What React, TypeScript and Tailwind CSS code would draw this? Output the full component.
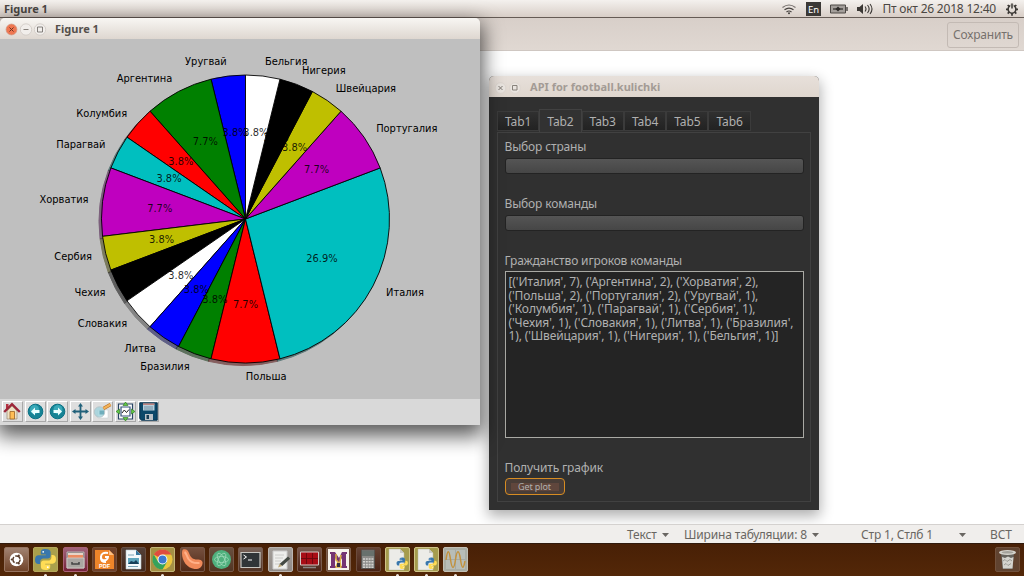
import React from "react";

type Slice = { name: string; n: number; color: string; shade: string };

const slices: Slice[] = [
  { name: "Уругвай", n: 1, color: "#0000ff", shade: "#00004d" },
  { name: "Аргентина", n: 2, color: "#008000", shade: "#002600" },
  { name: "Колумбия", n: 1, color: "#ff0000", shade: "#4d0000" },
  { name: "Парагвай", n: 1, color: "#00bfbf", shade: "#003939" },
  { name: "Хорватия", n: 2, color: "#bf00bf", shade: "#390039" },
  { name: "Сербия", n: 1, color: "#bfbf00", shade: "#393900" },
  { name: "Чехия", n: 1, color: "#000000", shade: "#000000" },
  { name: "Словакия", n: 1, color: "#ffffff", shade: "#4d4d4d" },
  { name: "Литва", n: 1, color: "#0000ff", shade: "#00004d" },
  { name: "Бразилия", n: 1, color: "#008000", shade: "#002600" },
  { name: "Польша", n: 2, color: "#ff0000", shade: "#4d0000" },
  { name: "Италия", n: 7, color: "#00bfbf", shade: "#003939" },
  { name: "Португалия", n: 2, color: "#bf00bf", shade: "#390039" },
  { name: "Швейцария", n: 1, color: "#bfbf00", shade: "#393900" },
  { name: "Нигерия", n: 1, color: "#000000", shade: "#000000" },
  { name: "Бельгия", n: 1, color: "#ffffff", shade: "#4d4d4d" },
];

const CX = 245.5;
const CY = 180;
const R = 144;
const TOTAL = 26;

function polar(angle: number, r: number) {
  return { x: CX + r * Math.cos(angle), y: CY - r * Math.sin(angle) };
}

function PieChart() {
  let acc = 0;
  const parts = slices.map((s) => {
    const a = Math.PI / 2 + (acc / TOTAL) * 2 * Math.PI;
    acc += s.n;
    const b = Math.PI / 2 + (acc / TOTAL) * 2 * Math.PI;
    const p = polar(a, R);
    const q = polar(b, R);
    const m = (a + b) / 2;
    return {
      ...s,
      d: `M${CX} ${CY}L${p.x} ${p.y}A${R} ${R} 0 0 0 ${q.x} ${q.y}Z`,
      label: polar(m, R * 1.1),
      pct: polar(m, R * 0.6),
      right: Math.cos(m) > -0.001,
    };
  });
  return (
    <svg width="479" height="360" viewBox="0 0 479 360" className="block" fontFamily="'DejaVu Sans', sans-serif" fontSize="9.9">
      <g transform="translate(-2.5 2.5)">
        {parts.map((p) => (
          <path key={p.name} d={p.d} fill={p.shade} stroke={p.shade} opacity="0.5" />
        ))}
      </g>
      {parts.map((p) => (
        <path key={p.name} d={p.d} fill={p.color} stroke="#000" strokeWidth="0.9" strokeLinejoin="round" />
      ))}
      {parts.map((p) => (
        <g key={p.name}>
          <text x={p.label.x + 0.3} y={p.label.y + 3} textAnchor={p.right ? "start" : "end"}>
            {p.name}
          </text>
          <text x={p.pct.x} y={p.pct.y + 3} textAnchor="middle" fillOpacity="0.85">
            {((p.n / TOTAL) * 100).toFixed(1)}%
          </text>
        </g>
      ))}
    </svg>
  );
}

function ToolButton({ children }: { children: React.ReactNode }) {
  return (
    <div className="flex h-[21px] w-[21px] items-center justify-center border border-t-white border-l-white border-r-[#a8a8a8] border-b-[#a8a8a8] bg-[#dedede]">
      <svg width="19" height="19" viewBox="0 0 19 19">
        {children}
      </svg>
    </div>
  );
}

function FigureToolbar() {
  return (
    <div className="flex h-[26px] gap-[1.6px] bg-[#d9d9d9] pt-[2px] pl-[2px]">
      <ToolButton>
        <path d="M4 9v8h10V9L9 4z" fill="#eee0c2" stroke="#8b7965" strokeWidth=".6" />
        <path d="M3 2h2.500v5H3z" fill="#b53040" />
        <path d="M1.200 10 9 2.200l7.800 7.800" fill="none" stroke="#9d2639" strokeWidth="2.300" />
        <path d="M7 9.500h4.500V17H7z" fill="#ffbd55" stroke="#9d6524" strokeWidth=".8" />
      </ToolButton>
      <ToolButton>
        <circle cx="9.500" cy="9.500" r="7.300" fill="#168395" stroke="#087084" />
        <circle cx="8.500" cy="7.500" r="4.500" fill="#38a9b8" />
        <path d="m5 9.500 4-4v2.600h4.500v2.800H9v2.600z" fill="#e9ffff" />
      </ToolButton>
      <ToolButton>
        <circle cx="9.500" cy="9.500" r="7.300" fill="#168395" stroke="#087084" />
        <circle cx="10" cy="7.500" r="4.500" fill="#38a9b8" />
        <path d="m14 9.500-4-4v2.600H5.500v2.800H10v2.600z" fill="#e9ffff" />
      </ToolButton>
      <ToolButton>
        <path d="M9.500 3v13M3 9.500h13" stroke="#21617a" strokeWidth="1.800" />
        <path d="M9.500 1 12 4.500H7zM9.500 18 12 14.500H7zM1 9.500 4.500 7v5zM18 9.500 14.500 7v5z" fill="#21617a" />
      </ToolButton>
      <ToolButton>
        <path d="M5 8h10v8H5z" fill="#fff" stroke="#c1ccd0" strokeWidth=".5" />
        <circle cx="6.500" cy="10" r="5.200" fill="#9fd2dc" fillOpacity=".8" stroke="#b5c6ca" />
        <path d="M6.500 8.500h4.500v4H6.500z" fill="#6faebc" />
        <path d="m10.500 6.500 7-4" stroke="#b76d1c" strokeWidth="3.400" />
        <path d="m10.500 6.500 7-4" stroke="#f2b25a" strokeWidth="2.200" />
      </ToolButton>
      <ToolButton>
        <path d="M2.500 2h14v15h-14z" fill="#fff" stroke="#294565" strokeWidth="1.200" />
        <path d="M5 5h9v9H5z" fill="#fff" stroke="#35527b" strokeWidth="1.200" />
        <path d="m6 11 2.300-3 2.200 2.500L13 7.500" fill="none" stroke="#222" />
        <path d="M9.500 0 12 3.500H7zM9.500 19 12 15.500H7zM0 9.500 3.500 7v5zM19 9.500 15.500 7v5z" fill="#62ca45" stroke="#267519" strokeWidth=".6" />
      </ToolButton>
      <ToolButton>
        <path d="M.8.800h17.400v17.400H2.500L.8 16.500z" fill="#0c4869" stroke="#07314c" />
        <path d="M4 1.500h11.500v7H4z" fill="#b8cfdb" />
        <path d="M4 1.500h11.500v1.300H4z" fill="#c07068" />
        <path d="M5 5h9M5 7h9" stroke="#416780" strokeWidth=".6" />
        <path d="M6 12h8v6H6z" fill="#bac1c6" />
        <path d="M7.500 13h2.500v4H7.500z" fill="#173d55" />
      </ToolButton>
    </div>
  );
}

function FigureWindow() {
  return (
    <div className="absolute top-[18px] left-0 w-[479.500px] rounded-t-[5px] shadow-[0_8px_20px_3px_rgba(0,0,0,0.65)]">
      <div className="flex h-[21px] items-center rounded-t-[5px] bg-gradient-to-b from-[#f8f6f3] to-[#ded7d0] pl-[5px]">
        <svg width="42" height="14" viewBox="0 0 42 14">
          <circle cx="6.500" cy="7.500" r="5.400" fill="#ef7650" stroke="#d39680" strokeWidth=".8" />
          <path d="m4.500 5.500 4 4m0-4-4 4" stroke="#6d3322" strokeWidth="1" />
          <circle cx="21" cy="7.500" r="5.700" fill="#f1eeeb" stroke="#cec8c3" strokeWidth=".8" />
          <path d="M18.500 7.500h5" stroke="#85807b" />
          <circle cx="35" cy="7.500" r="5.700" fill="#f1eeeb" stroke="#cec8c3" strokeWidth=".8" />
          <path d="M32.500 5h5v5h-5z" fill="none" stroke="#77736f" strokeWidth=".9" />
        </svg>
        <span className="ml-[8px] pt-[1px] text-[11px] font-bold text-[#55504b]">Figure 1</span>
      </div>
      <div className="h-[360px] bg-[#bfbfbf]">
        <PieChart />
      </div>
      <FigureToolbar />
    </div>
  );
}

function Field({ label }: { label: string }) {
  return (
    <div className="h-[57px]">
      <div className="h-[18px] text-[12px] leading-[17px] tracking-[-0.15px]">{label}</div>
      <div className="mt-[2px] h-[16px] rounded-[3px] border border-[#232323] bg-gradient-to-b from-[#555] to-[#464646]" />
    </div>
  );
}

const playerLines = [
  { text: "[('Италия', 7), ('Аргентина', 2), ('Хорватия', 2),", cls: "tracking-[-0.1px]" },
  { text: "('Польша', 2), ('Португалия', 2), ('Уругвай', 1),", cls: "tracking-[-0.11px]" },
  { text: "('Колумбия', 1), ('Парагвай', 1), ('Сербия', 1),", cls: "tracking-[-0.07px]" },
  { text: "('Чехия', 1), ('Словакия', 1), ('Литва', 1), ('Бразилия',", cls: "tracking-[-0.09px]" },
  { text: "1), ('Швейцария', 1), ('Нигерия', 1), ('Бельгия', 1)]", cls: "tracking-[-0.13px]" },
];

function ApiWindow() {
  return (
    <div className="absolute top-[76px] left-[489px] flex h-[434px] w-[330px] flex-col rounded-t-[5px] bg-[#303030] text-[#b0b0b0] shadow-[0_5px_14px_1px_rgba(0,0,0,0.32)]">
      <div className="flex h-[21px] shrink-0 items-center rounded-t-[5px] bg-gradient-to-b from-[#e7e0da] to-[#dfd6ce] pl-[5px]">
        <svg width="28" height="14" viewBox="0 0 28 14">
          <circle cx="6.500" cy="8" r="5.300" fill="#e9e4df" stroke="#ddd6d0" />
          <path d="m4.500 6 4 4m0-4-4 4" stroke="#7d7771" />
          <circle cx="21" cy="8" r="5.300" fill="#e9e4df" stroke="#ddd6d0" />
          <path d="M18.500 5.500h4.500v4.500h-4.500z" fill="none" stroke="#7d7771" strokeWidth=".9" />
        </svg>
        <span className="ml-[8px] pt-[2px] text-[11px] font-bold tracking-[0.02px] text-[#a39b95]">API for football.kulichki</span>
      </div>
      <div className="flex flex-1 flex-col px-[8px] pt-[12px] pb-[8px]">
        <div className="flex h-[23px] items-end text-[12px] tracking-[-0.1px]">
          {["Tab1", "Tab2", "Tab3", "Tab4", "Tab5", "Tab6"].map((tab) => (
            <div
              key={tab}
              className={
                tab === "Tab2"
                  ? "flex h-[23px] w-[42.300px] items-center justify-center border border-b-0 border-[#414141] bg-[#323232] pt-[1px]"
                  : "mb-[1px] flex h-[20px] w-[42.300px] items-center justify-center border border-[#3b3b3b] bg-gradient-to-b from-[#303030] to-[#222] pt-[2px]"
              }
            >
              {tab}
            </div>
          ))}
        </div>
        <div className="flex flex-1 flex-col border border-[#414141] px-[6.500px] pt-[5px]">
          <Field label="Выбор страны" />
          <Field label="Выбор команды" />
          <div className="h-[19px] text-[12px] leading-[17px] tracking-[-0.15px]">Гражданство игроков команды</div>
          <div className="h-[167px] border border-[#a9a9a4] bg-[#242424] pt-[3px] pl-[3px] text-[12px] leading-[13.500px] whitespace-pre">
            {playerLines.map((l) => (
              <div key={l.text} className={l.cls}>
                {l.text}
              </div>
            ))}
          </div>
          <div className="mt-[21px] h-[18px] text-[12px] leading-[18px] tracking-[-0.15px]">Получить график</div>
          <div className="mt-[1px] flex h-[17px] w-[60px] items-center justify-center rounded-[4px] border-[1.500px] border-[#d78c22] bg-[#493d37] text-[9px] tracking-[-0.1px]">
            <span className="flex h-[8px] w-[48px] items-center justify-center bg-[#60463c]">Get plot</span>
          </div>
        </div>
      </div>
    </div>
  );
}

function SystemBar() {
  return (
    <div className="flex h-[18px] shrink-0 items-center border-b border-[#655b55] bg-gradient-to-b from-[#f4f1ee] to-[#d8cec7] pr-[5px] pl-[4px] text-[#4b4743]">
      <span className="pt-[1px] text-[11px] font-bold">Figure 1</span>
      <div className="ml-auto flex items-center">
        <svg width="94" height="18" viewBox="0 0 94 18">
          <g fill="none" stroke="#45413e" strokeWidth="1.200">
            <path d="M2.500 7.500q6.500-5 13 0" stroke="#77726f" />
            <path d="M4.500 9.800q4.500-3.500 9 0M6.500 12q2.500-2 5 0" />
          </g>
          <circle cx="9" cy="13.300" r="1" fill="#45413e" />
          <path d="M26 2h15v14H26z" fill="#3b3835" />
          <path d="M50.500 5h15v8h-15z" fill="#a39e9a" stroke="#4c4845" />
          <path d="M66 7h2v4h-2z" fill="#77726f" />
          <path d="M53 9h10" stroke="#2c2927" strokeWidth="1.200" />
          <path d="M58 6.500 60.500 9 58 11.500 55.500 9z" fill="#2c2927" />
          <path d="M77 7h2.500L83 4v10l-3.500-3H77z" fill="#3b3835" />
          <path d="M85 6.500q2 2.500 0 5M87.500 5q3.300 4 0 8M90 4q4 5 0 10" fill="none" stroke="#3b3835" strokeWidth="1.100" />
          <text x="28" y="13" fontFamily="'Noto Sans', sans-serif" fontSize="9.500" fill="#fff">
            En
          </text>
        </svg>
        <span className="ml-[8px] text-[12px] tracking-[-0.21px] whitespace-pre">Пт окт 26 2018 12:40</span>
        <svg className="ml-[9px]" width="14" height="14" viewBox="0 0 14 14">
          <circle cx="7" cy="7.300" r="3.900" fill="none" stroke="#3b3835" strokeWidth="1.600" />
          <path d="M7 11v2.700M1 7.300h2M11 7.300h2M2.700 3l1.400 1.400M11.300 3 9.900 4.400M2.700 11.600l1.400-1.400M11.300 11.600l-1.400-1.400" stroke="#3b3835" strokeWidth="1.700" />
          <path d="M5.300 1h3.400v4H5.300z" fill="#e4ded9" />
          <path d="M7 1.500v5" stroke="#3b3835" strokeWidth="1.500" />
        </svg>
      </div>
    </div>
  );
}

function Caret() {
  return (
    <svg width="7" height="4" viewBox="0 0 7 4">
      <path d="M0 0h7L3.500 4z" fill="#696662" />
    </svg>
  );
}

function Tile({ className, children, running }: { className: string; children: React.ReactNode; running?: boolean }) {
  return (
    <div className="relative h-[25px] w-[25px] shrink-0">
      <div className={`h-[25px] w-[25px] rounded-[2px] border ${className}`}>
        <svg width="23" height="23" viewBox="0 0 23 23">
          {children}
        </svg>
      </div>
      {running && <div className="absolute bottom-[-4px] left-[11px] h-[2px] w-[3px] rounded-t-full bg-[#eee5df]" />}
    </div>
  );
}

function PythonMark() {
  return (
    <>
      <path d="M11.400 1C7.500 1 6.800 2.600 6.800 4.200v2.200h5v.9H4.500C2.500 7.300 1 8.800 1 11.700s1.400 4.200 3.300 4.200h1.800v-2.300c0-1.900 1.500-3.200 3.300-3.200h4.500c1.500 0 2.700-1.200 2.700-2.700V4.200C16.600 2 14.500 1 11.400 1z" fill="#3977ac" />
      <path d="M11.600 22c3.900 0 4.600-1.600 4.600-3.200v-2.200h-5v-.9h7.300c2 0 3.500-1.500 3.500-4.400s-1.400-4.200-3.300-4.200h-1.300v2.300c0 1.900-1.500 3.200-3.300 3.200H9.600c-1.500 0-2.700 1.200-2.700 2.700v3.500c0 2.200 1.600 3.200 4.700 3.200z" fill="#ffdc55" />
      <circle cx="9.200" cy="3.800" r=".9" fill="#fff" />
      <circle cx="13.800" cy="19.200" r=".9" fill="#fff" />
    </>
  );
}

function PythonFile() {
  return (
    <>
      <path d="M3 1h11l4 4v17H3z" fill="#ecece8" stroke="#bbb9a7" strokeWidth=".5" />
      <path d="M14 1v4h4z" fill="#c9c9c5" />
      <g transform="translate(10 9) scale(.54)">
        <PythonMark />
      </g>
    </>
  );
}

function Dock() {
  return (
    <div className="flex h-[33px] shrink-0 items-start gap-[4.300px] border-t border-[#301a0c] bg-gradient-to-b from-[#482006] to-[#532708] pt-[3px] pr-[4px] pl-[4px]">
      <Tile className="border-[#96735f] bg-gradient-to-b from-[#a18372] to-[#704329]">
        <circle cx="11.500" cy="11.500" r="6.800" fill="#fff" />
        <circle cx="11.500" cy="11.500" r="3.600" fill="none" stroke="#593c2b" strokeWidth="1.500" strokeDasharray="6.200 1.340" />
        <circle cx="6.800" cy="11.500" r="1.100" fill="#593c2b" />
        <circle cx="13.800" cy="7.500" r="1.100" fill="#593c2b" />
        <circle cx="13.800" cy="15.500" r="1.100" fill="#593c2b" />
      </Tile>
      <Tile running className="border-[#b5a75b] bg-[#aaa04c]">
        <PythonMark />
      </Tile>
      <Tile running className="border-[#a96076] bg-gradient-to-b from-[#a0637a] to-[#752039]">
        <path d="M3 4h17v16H3z" fill="#777370" stroke="#b9b6b4" />
        <path d="M4 5h15v5H4z" fill="#e6d4c8" />
        <path d="M4 7h15v3H4z" fill="#ea8b62" />
        <path d="M3 10h17v10H3z" fill="#aaa6a2" stroke="#d8d4d0" strokeWidth=".7" />
        <path d="M8 14v2h7v-2" fill="none" stroke="#444" strokeWidth="1.500" />
      </Tile>
      <Tile className="border-[#73503c] bg-[#704028]">
        <path d="M2 2h14l5 5v14H2z" fill="#ef8529" />
        <path d="M16 2v5h5z" fill="#ffc083" />
        <path d="M15 5q-7-1-7 4 0 4 5 3 2-1 2-3h-3M8 9q-1 5 5 5" fill="none" stroke="#fff" strokeWidth="2" />
        <text x="6" y="20" fontFamily="'Liberation Sans', sans-serif" fontWeight="bold" fontSize="5.500" fill="#fff">
          PDF
        </text>
      </Tile>
      <Tile className="border-[#685044] bg-gradient-to-b from-[#534038] to-[#44291c]">
        <path d="M4 2h10l5 5v14H4z" fill="#f4f9fb" stroke="#b6c6ce" strokeWidth=".6" />
        <path d="M14 2v5h5z" fill="#34769e" />
        <path d="M6 10h11v6H6z" fill="#5fa6bd" />
        <path d="m6 16 3-3 3 1 2-2 3 4z" fill="#163f59" />
        <path d="M6 7h6M6 18.500h10" stroke="#7aa5b7" />
      </Tile>
      <Tile running className="border-[#c2b578] bg-[#a59144]">
        <circle cx="11.500" cy="11.500" r="10" fill="#eac63f" />
        <path d="M11.500 11.500 2.800 6.500A10 10 0 0 1 20.200 6.500h-8.700z" fill="#df4c3f" />
        <path d="M2.800 6.500A10 10 0 0 0 11.500 21.500L16 14l-8.800 0z" fill="#35a25b" />
        <circle cx="11.500" cy="11.500" r="4.900" fill="#fff" />
        <circle cx="11.500" cy="11.500" r="4" fill="#3d79cf" />
      </Tile>
      <Tile className="border-[#765747] bg-gradient-to-b from-[#76503e] to-[#512a18]">
        <path d="M2 1.500C5 .5 7 2 8 5c1.500 4.500 4 6.500 8 6.500 4 0 6 1.500 5.500 4-.5 4-4 6-8 5.500C6 20 1 13 1 5q0-3 1-3.500z" fill="#f08a5a" />
        <path d="M3.500 4c2 1 2 4 4 7 2.500 3.500 6 4.500 11 4" fill="none" stroke="#ffb088" strokeWidth="2" />
      </Tile>
      <Tile className="border-[#765747] bg-gradient-to-b from-[#68503f] to-[#523522]">
        <circle cx="11.500" cy="11.500" r="9.500" fill="#4fb07d" />
        <g fill="none" stroke="#9ed9b8" strokeWidth=".8">
          <ellipse cx="11.500" cy="11.500" rx="7" ry="3" />
          <ellipse cx="11.500" cy="11.500" rx="7" ry="3" transform="rotate(60 11.500 11.500)" />
          <ellipse cx="11.500" cy="11.500" rx="7" ry="3" transform="rotate(120 11.500 11.500)" />
        </g>
      </Tile>
      <Tile className="border-[#785b4d] bg-gradient-to-b from-[#79645a] to-[#513325]">
        <path d="M2 4.500h19v15H2z" fill="#303538" stroke="#c7c6c1" strokeWidth="1.200" />
        <path d="m4.500 7 3 2-3 2M9 12h4" fill="none" stroke="#fff" />
      </Tile>
      <Tile running className="border-[#bbb5b0] bg-gradient-to-b from-[#a39e9a] to-[#918b87]">
        <path d="M4 3h14v18H4z" fill="#eeeeec" stroke="#ccc" />
        <path d="M6 7h9M6 10h8M6 13h6M6 16h5" stroke="#c2c2c2" strokeWidth=".8" />
        <path d="m10.500 16 8.500-7.500 2.200 2.200-8 7.300z" fill="#444943" />
        <path d="m10.500 16-1.500 3.500 4.200-1.500z" fill="#bca676" />
      </Tile>
      <Tile className="border-[#785b4d] bg-gradient-to-b from-[#78564b] to-[#4b2417]">
        <path d="M2.500 4h18v13h-18z" fill="#a80d16" stroke="#d0c8c5" />
        <path d="M3 10.500h17M8.500 5v11M14.500 5v11" stroke="#6a080d" strokeWidth=".9" />
        <path d="M5 19.500h13" stroke="#8a8684" strokeWidth="1.500" />
      </Tile>
      <Tile className="border-[#7e604f] bg-[#6f5140]">
        <path d="M1 1h21v21H1z" fill="#f6f2eb" />
        <path d="M3 4h5l4 6 3-6h5v2h-1v12h1v2h-6v-2h1v-8l-3 5-4-5v8h1v2H3v-2h1V6H3z" fill="#743473" />
        <path d="M9 6v6l2 2-2 5h5l-1-5 1-7" fill="none" stroke="#ddb340" strokeWidth="1.500" />
        <path d="M10 15h3v4h-3z" fill="#343044" />
      </Tile>
      <Tile className="border-[#6b4b3c] bg-gradient-to-b from-[#644234] to-[#492415]">
        <path d="M4.500 2h13v18.500h-13z" fill="#8b8b88" stroke="#565450" />
        <path d="M5 3h12v5H5z" fill="#68716d" />
        <path d="M6 11h11M6 13.800h11M6 16.600h11M6 19.200h11" stroke="#d3d3cf" strokeWidth="1.600" strokeDasharray="2 .8" />
      </Tile>
      <Tile running className="border-[#d0c489] bg-[#a59c4d]">
        <PythonFile />
      </Tile>
      <Tile running className="border-[#d0c489] bg-[#a59c4d]">
        <PythonFile />
      </Tile>
      <Tile running className="border-[#c3c0b5] bg-[#aaaea5]">
        <path d="M2 2h19v19H2z" fill="#b8bdb7" />
        <path d="M2 11.500h19M11.500 2v19" stroke="#989e99" strokeWidth=".6" />
        <path d="M2 12C3.500 1 5 1 6.500 11.500S10 22 11.500 11.500 15 1 16.500 11.500 19.500 21 21 13" fill="none" stroke="#c3923d" strokeWidth="1.500" />
      </Tile>
      <div className="ml-auto">
        <Tile className="border-[#71513c] bg-[#604330]">
          <path d="M5 5h13l-1.500 16h-10z" fill="#66645e" />
          <path d="M6 9l3 1 3-1.500 3 1.500 2.500-1-1 11.500h-9.500z" fill="#d4d4cf" />
          <path d="m7 13 2-1.500 2 2 3-2 2 1.500M8 17l2-1.500 2 2 3-2" fill="none" stroke="#94948e" strokeWidth=".9" />
          <ellipse cx="11.500" cy="4.500" rx="8.500" ry="2.500" fill="#d5d4cd" />
          <ellipse cx="11.500" cy="4.300" rx="6" ry="1.200" fill="#a3a29b" />
        </Tile>
      </div>
    </div>
  );
}

export default function App() {
  return (
    <div className="relative flex h-[576px] w-[1024px] flex-col overflow-hidden bg-white font-['Noto_Sans',sans-serif]">
      <SystemBar />
      <div className="flex h-[33px] shrink-0 items-start justify-end border-b border-[#cfc7c2] bg-gradient-to-b from-[#d8cfc9] to-[#e0d8d2] pt-[4px] pr-[5px]">
        <div className="flex h-[26px] w-[72px] items-center justify-center rounded-[3px] border border-[#c3bab4] text-[12px] tracking-[-0.2px] text-[#76716d]">Сохранить</div>
      </div>
      <div className="flex-1" />
      <div className="relative z-10 flex h-[19px] shrink-0 items-center border-t border-[#d4d1cf] bg-[#f0eeec] pt-[1px] text-[12px] tracking-[-0.15px] text-[#696662]">
        <div className="ml-[627px] flex w-[57px] items-center gap-[5px]">Текст<Caret /></div>
        <div className="flex w-[177px] items-center gap-[5px] whitespace-pre">Ширина табуляции: 8<Caret /></div>
        <div className="w-[98px]">Стр 1, Стлб 1</div>
        <div className="w-[31px]"><Caret /></div>
        <div>ВСТ</div>
      </div>
      <Dock />
      <ApiWindow />
      <FigureWindow />
    </div>
  );
}
